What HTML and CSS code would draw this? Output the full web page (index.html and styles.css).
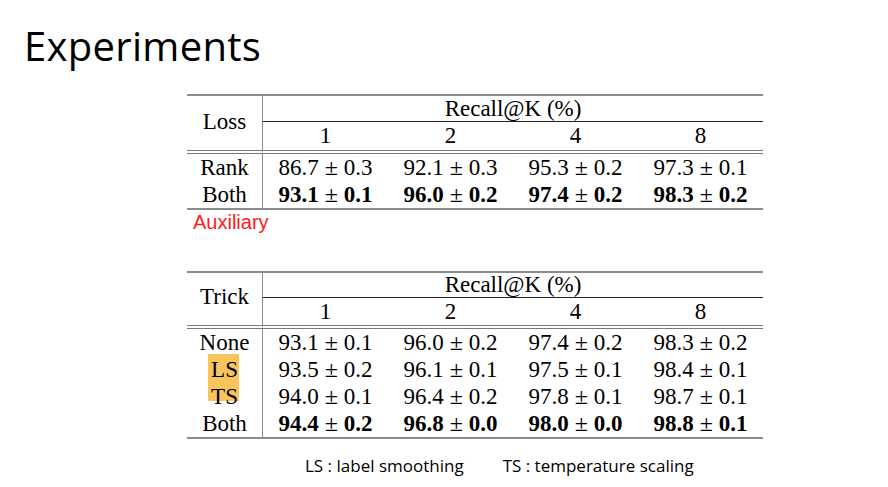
FILE: index.html
```html
<!DOCTYPE html>
<html lang="en">
<head>
<meta charset="utf-8">
<title>Experiments</title>
<link rel="stylesheet" href="styles.css">
</head>
<body>
<div class="slide">
  <h1 class="title">Experiments</h1>

  <div class="tbl-wrap tbl-first">
    <table class="res">
      <colgroup><col class="c-stub"><col class="c-num"><col class="c-num"><col class="c-num"><col class="c-num"></colgroup>
      <tr class="h1">
        <td class="stub head" rowspan="2">Loss</td>
        <td class="group" colspan="4">Recall@K (%)</td>
      </tr>
      <tr class="h2">
        <td class="k">1</td><td class="k">2</td><td class="k">4</td><td class="k">8</td>
      </tr>
      <tr class="row">
        <td class="stub">Rank</td>
        <td>86.7<span class="pm">±</span>0.3</td>
        <td>92.1<span class="pm">±</span>0.3</td>
        <td>95.3<span class="pm">±</span>0.2</td>
        <td>97.3<span class="pm">±</span>0.1</td>
      </tr>
      <tr class="row last">
        <td class="stub">Both</td>
        <td><b>93.1</b><span class="pm">±</span><b>0.1</b></td>
        <td><b>96.0</b><span class="pm">±</span><b>0.2</b></td>
        <td><b>97.4</b><span class="pm">±</span><b>0.2</b></td>
        <td><b>98.3</b><span class="pm">±</span><b>0.2</b></td>
      </tr>
    </table>
  </div>

  <div class="aux">Auxiliary</div>

  <div class="tbl-wrap tbl-second">
    <div class="hl"></div>
    <table class="res">
      <colgroup><col class="c-stub"><col class="c-num"><col class="c-num"><col class="c-num"><col class="c-num"></colgroup>
      <tr class="h1 h1-tight">
        <td class="stub head" rowspan="2">Trick</td>
        <td class="group" colspan="4">Recall@K (%)</td>
      </tr>
      <tr class="h2">
        <td class="k">1</td><td class="k">2</td><td class="k">4</td><td class="k">8</td>
      </tr>
      <tr class="row">
        <td class="stub">None</td>
        <td>93.1<span class="pm">±</span>0.1</td>
        <td>96.0<span class="pm">±</span>0.2</td>
        <td>97.4<span class="pm">±</span>0.2</td>
        <td>98.3<span class="pm">±</span>0.2</td>
      </tr>
      <tr class="row">
        <td class="stub">LS</td>
        <td>93.5<span class="pm">±</span>0.2</td>
        <td>96.1<span class="pm">±</span>0.1</td>
        <td>97.5<span class="pm">±</span>0.1</td>
        <td>98.4<span class="pm">±</span>0.1</td>
      </tr>
      <tr class="row">
        <td class="stub">TS</td>
        <td>94.0<span class="pm">±</span>0.1</td>
        <td>96.4<span class="pm">±</span>0.2</td>
        <td>97.8<span class="pm">±</span>0.1</td>
        <td>98.7<span class="pm">±</span>0.1</td>
      </tr>
      <tr class="row last">
        <td class="stub">Both</td>
        <td><b>94.4</b><span class="pm">±</span><b>0.2</b></td>
        <td><b>96.8</b><span class="pm">±</span><b>0.0</b></td>
        <td><b>98.0</b><span class="pm">±</span><b>0.0</b></td>
        <td><b>98.8</b><span class="pm">±</span><b>0.1</b></td>
      </tr>
    </table>
  </div>

  <div class="legend">
    <span>LS : label smoothing</span>
    <span class="legend-second">TS : temperature scaling</span>
  </div>
</div>
</body>
</html>
```

FILE: styles.css
```css
html, body {
  margin: 0;
  padding: 0;
  background: #ffffff;
}

.slide {
  width: 888px;
  height: 487px;
  padding-top: 26px;
  box-sizing: border-box;
  overflow: hidden;
  color: #000000;
}

.title {
  margin: 0 0 0 24px;
  font-family: "Open Sans", "Noto Sans", sans-serif;
  font-weight: 400;
  font-size: 40px;
  line-height: 40px;
  letter-spacing: 0.3px;
}

.tbl-wrap {
  position: relative;
  margin-left: 187px;
  width: 576px;
}

.tbl-first {
  margin-top: 28px;
}

.tbl-second {
  margin-top: 39px;
}

.res {
  position: relative;
  border-collapse: separate;
  border-spacing: 0;
  table-layout: fixed;
  width: 576px;
  font-family: "Liberation Serif", "Times New Roman", serif;
  font-size: 23px;
  color: #000000;
}

.c-stub { width: 76px; }
.c-num { width: 125px; }

.res td {
  padding: 0;
  text-align: center;
  white-space: nowrap;
  vertical-align: middle;
}

.res b {
  font-weight: 700;
}

.pm {
  margin: 0 6px;
  font-size: 24px;
  font-weight: 400;
}

.stub {
  border-right: 1px solid #8c8c8c;
}

.h1 td {
  border-top: 2px solid #8c8c8c;
  line-height: 25px;
}

.h1-tight td {
  line-height: 24px;
}

.h1 .group {
  border-bottom: 1px solid #222222;
}

.res .head {
  border-bottom: 4px double #7a7a7a;
  padding-bottom: 4px;
}

.h2 td {
  line-height: 28px;
  border-bottom: 4px double #7a7a7a;
}

.tbl-second .h2 td {
  line-height: 27px;
}

.row td {
  line-height: 27px;
}

.row.last td {
  border-bottom: 2px solid #8c8c8c;
}

.hl {
  position: absolute;
  left: 21px;
  top: 83px;
  width: 31px;
  height: 47px;
  background: #f8c45c;
}

.aux {
  margin: 2px 0 0 193px;
  font-family: "Liberation Sans", Arial, sans-serif;
  font-size: 20px;
  line-height: 20px;
  color: #ff1a1a;
}

.legend {
  display: flex;
  margin: 18px 0 0 305px;
  font-family: "Open Sans", "Noto Sans", sans-serif;
  font-size: 17px;
  line-height: 17px;
}

.legend-second {
  margin-left: 39px;
}
```
